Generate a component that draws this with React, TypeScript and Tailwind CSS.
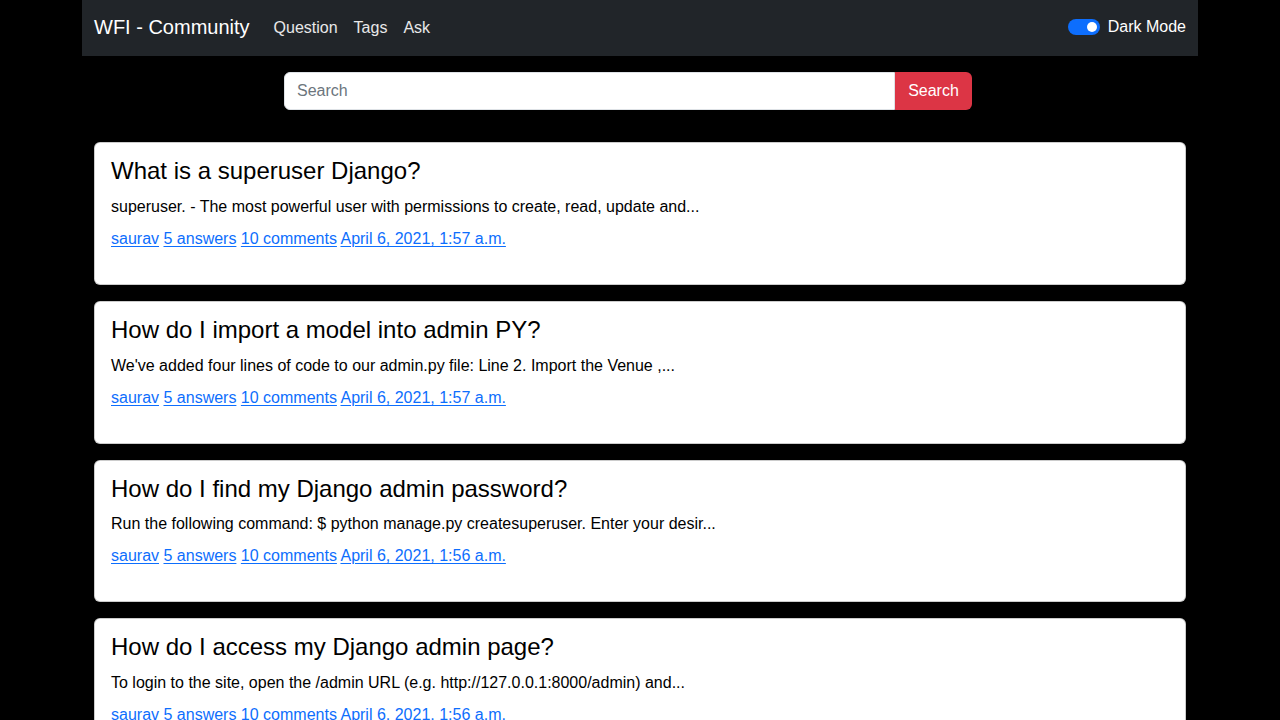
import React from 'react';

type Question = {
  title: string;
  excerpt: string;
  date: string;
};

const questions: Question[] = [
  {
    title: 'What is a superuser Django?',
    excerpt: 'superuser. - The most powerful user with permissions to create, read, update and...',
    date: 'April 6, 2021, 1:57 a.m.',
  },
  {
    title: 'How do I import a model into admin PY?',
    excerpt: "We've added four lines of code to our admin.py file: Line 2. Import the Venue ,...",
    date: 'April 6, 2021, 1:57 a.m.',
  },
  {
    title: 'How do I find my Django admin password?',
    excerpt: 'Run the following command: $ python manage.py createsuperuser. Enter your desir...',
    date: 'April 6, 2021, 1:56 a.m.',
  },
  {
    title: 'How do I access my Django admin page?',
    excerpt: 'To login to the site, open the /admin URL (e.g. http://127.0.0.1:8000/admin) and...',
    date: 'April 6, 2021, 1:56 a.m.',
  },
];

const QuestionCard: React.FC<{ q: Question }> = ({ q }) => (
  <div className="bg-white border border-black/20 rounded-[6px] p-4 text-black">
    <h4 className="text-[24px] leading-[1.2] -mt-0.5 mb-[9px]">{q.title}</h4>
    <p className="text-base leading-6 mb-2">{q.excerpt}</p>
    <p className="text-base leading-6 mb-[17px] text-[#0d6efd]">
      <a href="#" className="underline underline-offset-2">saurav</a>{' '}
      <a href="#" className="underline underline-offset-2">5 answers</a>{' '}
      <a href="#" className="underline underline-offset-2">10 comments</a>{' '}
      <a href="#" className="underline underline-offset-2">{q.date}</a>
    </p>
  </div>
);

const App: React.FC = () => {
  return (
    <div className="min-h-screen bg-black font-['Liberation_Sans',Arial,sans-serif]">
      <div className="w-[1116px] mx-auto">
        <nav className="h-14 bg-[#212529] px-3 flex items-center justify-between">
          <div className="flex items-center">
            <a href="#" className="text-[20px] text-white mr-4 -mt-0.5">WFI - Community</a>
            <a href="#" className="px-2 text-base text-white/90">Question</a>
            <a href="#" className="px-2 text-base text-white/90">Tags</a>
            <a href="#" className="px-2 text-base text-white/90">Ask</a>
          </div>
          <label className="flex items-center text-white text-base -mt-0.5">
            <span className="w-8 h-4 rounded-full bg-[#0d6efd] flex items-center justify-end px-[3px] mr-2">
              <span className="w-[10px] h-[10px] rounded-full bg-white" />
            </span>
            Dark Mode
          </label>
        </nav>

        <form className="mt-4 ml-[202px] w-[688px] flex h-[38px]" onSubmit={(e) => e.preventDefault()}>
          <input
            type="text"
            placeholder="Search"
            className="flex-1 bg-white rounded-l-[6px] border border-[#dee2e6] px-3 text-base text-[#212529] placeholder:text-[#6c757d] outline-none"
          />
          <button type="submit" className="w-[77px] bg-[#dc3545] text-white text-base rounded-r-[6px]">
            Search
          </button>
        </form>

        <div className="px-3 mt-8 flex flex-col gap-4">
          {questions.map((q, i) => (
            <QuestionCard key={i} q={q} />
          ))}
        </div>
      </div>
    </div>
  );
};

export default App;
